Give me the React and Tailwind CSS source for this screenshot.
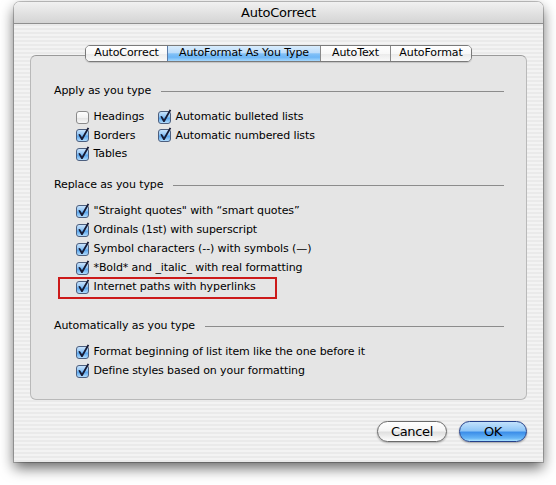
import React from "react";

function Box({ checked }) {
  const id = checked ? "cbOn" : "cbOff";
  return (
    <svg width="13" height="13" viewBox="0 0 13 13" className="overflow-visible shrink-0">
      <defs>
        <linearGradient id="cbOn" x1="0" y1="0" x2="0" y2="1">
          <stop offset="0" stopColor="#cfe6fc" />
          <stop offset="0.45" stopColor="#8cc3f5" />
          <stop offset="0.55" stopColor="#5aa6ee" />
          <stop offset="1" stopColor="#b9e0fd" />
        </linearGradient>
        <linearGradient id="cbOff" x1="0" y1="0" x2="0" y2="1">
          <stop offset="0" stopColor="#ffffff" />
          <stop offset="0.5" stopColor="#f2f2f2" />
          <stop offset="0.55" stopColor="#e4e4e4" />
          <stop offset="1" stopColor="#fafafa" />
        </linearGradient>
      </defs>
      <rect
        x="0.5"
        y="0.5"
        width="12"
        height="12"
        rx="2.5"
        fill={`url(#${id})`}
        stroke={checked ? "#4d5f7e" : "#8a8a8a"}
        strokeWidth="1"
      />
      {checked && (
        <path
          d="M2.3 5.6 L3.9 4.9 L6.0 8.2 L11.6 -1.6 L13.2 -0.8 L6.6 11.0 L5.3 11.0 Z"
          fill="#171b35"
        />
      )}
    </svg>
  );
}

function Item({ label, checked = true }) {
  return (
    <div className="flex items-center gap-[4.5px] whitespace-nowrap">
      <Box checked={checked} />
      <span>{label}</span>
    </div>
  );
}

function Header({ children }) {
  return (
    <div className="flex items-center h-[18px]">
      <span className="whitespace-nowrap">{children}</span>
      <div className="flex-1 ml-[10px] h-px bg-[#8c8c8c]" />
    </div>
  );
}

export default function App() {
  return (
    <div className="w-[556px] h-[485px] bg-white pt-[2px] pl-[14px] font-['DejaVu_Sans',sans-serif] text-black text-[11px] tracking-[-0.1px]">
      <div className="w-[529px] h-[460px] rounded-t-[6px] flex flex-col shadow-[0_6px_14px_rgba(0,0,0,0.6),0_0_0_1px_rgba(0,0,0,0.22)] bg-[repeating-linear-gradient(180deg,#f3f3f3_0px,#f3f3f3_2px,#eaeaea_2px,#eaeaea_4px)]">
        <div className="h-[22px] shrink-0 rounded-t-[6px] border-b border-[#8f8f8f] bg-[linear-gradient(#f1f1f1,#d4d4d4)] flex items-center justify-center text-[13px] tracking-[-0.25px]">
          AutoCorrect
        </div>
        <div className="flex-1 flex flex-col px-[16px] pt-[21px]">
          <div className="relative z-10 flex justify-center -mb-[7px]">
            <div className="flex w-[387px] h-[17px] rounded-[5px] border border-[#7a7a7a] overflow-hidden shadow-[0_1px_1px_rgba(0,0,0,0.15)]">
              <div className="w-[81px] flex items-center justify-center bg-[linear-gradient(#ffffff_0%,#f8f8f8_50%,#ebebeb_55%,#f9f9f9_100%)]">
                AutoCorrect
              </div>
              <div className="w-[153px] flex items-center justify-center border-l border-[#5a7aa6] bg-[linear-gradient(#d9edfd_0%,#bcdcfa_45%,#83c1f7_52%,#6db6f6_75%,#a6d8fd_100%)]">
                AutoFormat As You Type
              </div>
              <div className="w-[70px] flex items-center justify-center border-l border-[#8a8a8a] bg-[linear-gradient(#ffffff_0%,#f8f8f8_50%,#ebebeb_55%,#f9f9f9_100%)]">
                AutoText
              </div>
              <div className="w-[81px] flex items-center justify-center border-l border-[#8a8a8a] bg-[linear-gradient(#ffffff_0%,#f8f8f8_50%,#ebebeb_55%,#f9f9f9_100%)]">
                AutoFormat
              </div>
            </div>
          </div>
          <div className="h-[345px] shrink-0 rounded-[6px] border border-[#b9b9b9] border-t-[#9a9a9a] bg-[#e5e5e5] pl-[23px] pr-[22px] pt-[26px] flex flex-col">
            <Header>Apply as you type</Header>
            <div className="mt-[8px] pl-[22px] grid grid-cols-[82px_auto] auto-rows-[18.5px] items-center">
              <Item label="Headings" checked={false} />
              <Item label="Automatic bulleted lists" />
              <Item label="Borders" />
              <Item label="Automatic numbered lists" />
              <Item label="Tables" />
            </div>
            <div className="mt-[12.5px]">
              <Header>Replace as you type</Header>
            </div>
            <div className="mt-[7.5px] pl-[22px] flex flex-col">
              <div className="h-[19px] flex items-center">
                <Item label={"\"Straight quotes\" with \u201csmart quotes\u201d"} />
              </div>
              <div className="h-[19px] flex items-center">
                <Item label="Ordinals (1st) with superscript" />
              </div>
              <div className="h-[19px] flex items-center">
                <Item label="Symbol characters (--) with symbols (—)" />
              </div>
              <div className="h-[19px] flex items-center">
                <Item label="*Bold* and _italic_ with real formatting" />
              </div>
              <div className="h-[19px] flex items-center relative">
                <Item label="Internet paths with hyperlinks" />
                <div className="absolute left-[-18px] top-[-1px] w-[219px] h-[22px] border-2 border-[#cc1a1a]" />
              </div>
            </div>
            <div className="mt-[20.5px]">
              <Header>Automatically as you type</Header>
            </div>
            <div className="mt-[7.5px] pl-[22px] flex flex-col">
              <div className="h-[19px] flex items-center">
                <Item label="Format beginning of list item like the one before it" />
              </div>
              <div className="h-[19px] flex items-center">
                <Item label="Define styles based on your formatting" />
              </div>
            </div>
          </div>
          <div className="flex justify-end gap-[12px] pt-[21px] text-[13px] tracking-[-0.3px]">
            <button className="w-[70px] h-[21px] rounded-full border border-[#6a6a6a] bg-[linear-gradient(#ffffff_0%,#f5f5f5_45%,#e0e0e0_55%,#f4f4f4_85%,#ffffff_100%)] shadow-[0_1px_2px_rgba(0,0,0,0.3)] flex items-center justify-center">
              Cancel
            </button>
            <button className="w-[68px] h-[21px] rounded-full border border-[#24408a] bg-[linear-gradient(#c3e2fc_0%,#8fc6f7_45%,#3d8fe9_55%,#66b5f6_85%,#a9e2ff_100%)] shadow-[0_1px_2px_rgba(0,0,0,0.35)] flex items-center justify-center">
              OK
            </button>
          </div>
        </div>
      </div>
    </div>
  );
}
